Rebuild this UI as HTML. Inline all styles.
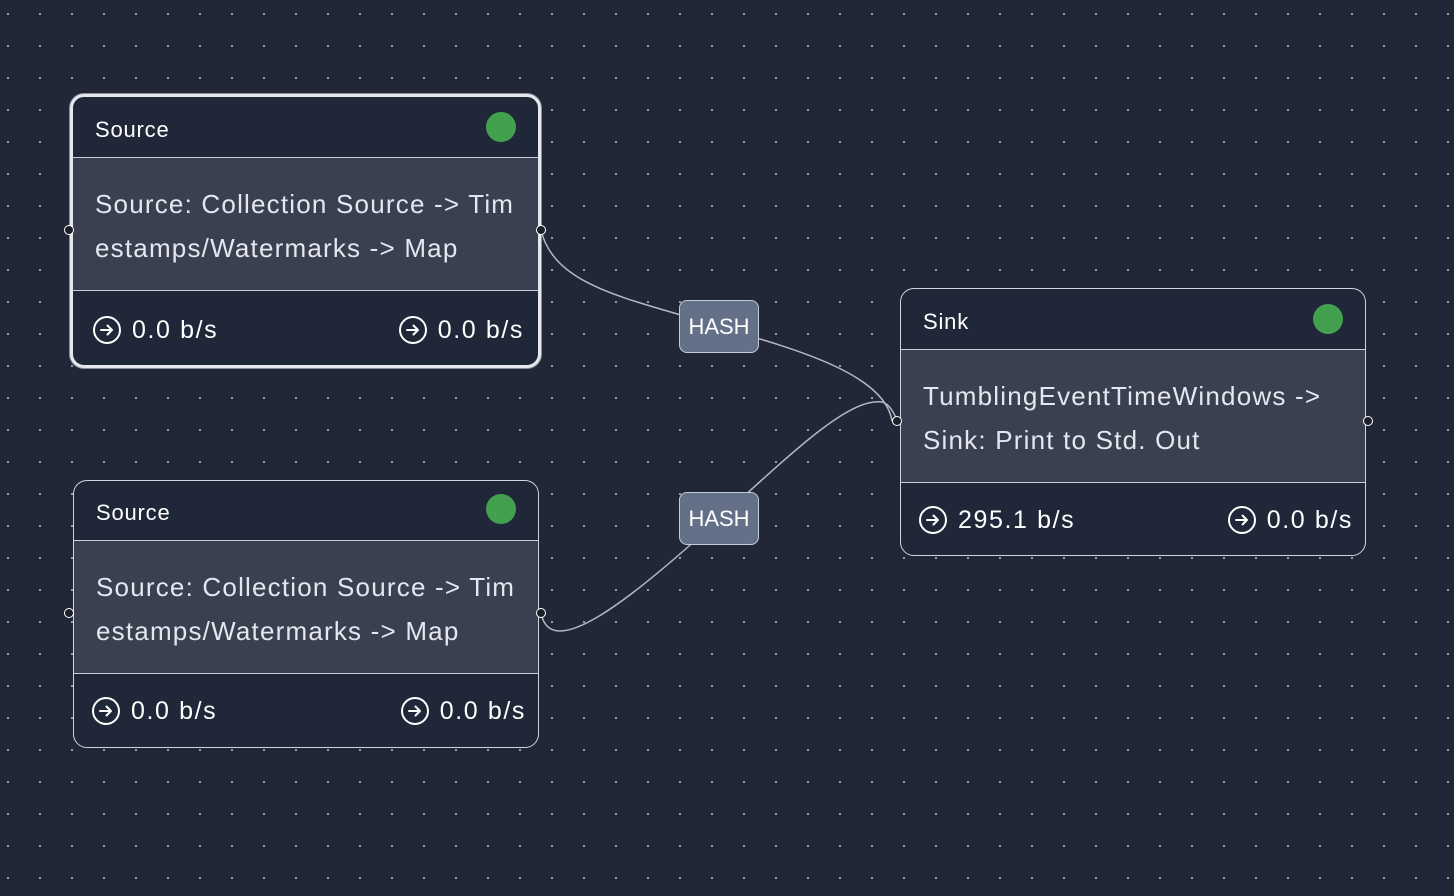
<!DOCTYPE html>
<html><head><meta charset="utf-8"><style>
*{margin:0;padding:0;box-sizing:border-box}
body{width:1454px;height:896px;overflow:hidden;background:#212736;font-family:"Liberation Sans",sans-serif;position:relative;
background-image:radial-gradient(circle,#9aa0ad 1px,transparent 1.3px);background-size:32px 32px;background-position:-8px -2px}
.node{position:absolute;border:1.5px solid #d0d4dc;border-radius:14px;background:#1f2738;overflow:visible}
.node.sel{border:3px solid #e6e8ee;box-shadow:0 0 0 1px #8a8f99}
.hd{height:61px;position:relative;border-bottom:1.5px solid #c9ccd3;color:#fff;font-size:22px;letter-spacing:0.8px;padding:20px 0 0 22px}
.dot{position:absolute;right:22px;top:15px;width:30px;height:30px;border-radius:50%;background:#43a04f}
.bd{height:133px;background:#3a4050;border-bottom:1.5px solid #c9ccd3;color:#e4e7ee;font-size:26px;line-height:44px;padding:24px 0 0 22px;white-space:nowrap;letter-spacing:1.2px}
.ft{height:74px;position:relative;color:#fff;font-size:25px;letter-spacing:1.6px}
.m{position:absolute;top:24px;display:flex;align-items:center;gap:10px}
.m svg{width:30px;height:30px}
.port{position:absolute;width:10px;height:10px;border-radius:50%;background:#1a1f2b;border:1.5px solid #fff}
.hash{position:absolute;width:80px;height:53px;background:#647087;border:1.5px solid #c5cad4;border-radius:8px;color:#fff;font-size:22px;text-align:center;line-height:52px}
</style></head><body>
<svg width="1454" height="896" style="position:absolute;left:0;top:0">
<path d="M541 230 C555 290 640 300 719 327 C800 350 885 375 892 421" stroke="#b4b8c0" stroke-width="1.5" fill="none"/>
<path d="M541 613 C550 660 620 610 719 519 C800 445 850 398 882 402 C890 404 895 415 897 421" stroke="#b4b8c0" stroke-width="1.5" fill="none"/>
</svg>
<svg width="0" height="0" style="position:absolute"><defs><symbol id="ic" viewBox="0 0 30 30"><circle cx="15" cy="15" r="13" fill="none" stroke="#fff" stroke-width="2"/><path d="M9 15h11M15.5 10.5l4.5 4.5-4.5 4.5" fill="none" stroke="#fff" stroke-width="2" stroke-linecap="round" stroke-linejoin="round"/></symbol></defs></svg>

<div class="node sel" style="left:70px;top:94px;width:471px;height:274px">
<div class="hd" style="height:61px;padding-top:20px">Source<div class="dot"></div></div>
<div class="bd">Source: Collection Source -&gt; Tim<br>estamps/Watermarks -&gt; Map</div>
<div class="ft"><div class="m" style="left:19px"><svg><use href="#ic"/></svg>0.0 b/s</div><div class="m" style="right:14px"><svg><use href="#ic"/></svg>0.0 b/s</div></div>
</div>

<div class="node" style="left:73px;top:480px;width:466px;height:268px">
<div class="hd" style="height:60px;padding-top:19px">Source<div class="dot" style="top:13px"></div></div>
<div class="bd">Source: Collection Source -&gt; Tim<br>estamps/Watermarks -&gt; Map</div>
<div class="ft"><div class="m" style="left:17px;top:22px"><svg><use href="#ic"/></svg>0.0 b/s</div><div class="m" style="right:12px;top:22px"><svg><use href="#ic"/></svg>0.0 b/s</div></div>
</div>

<div class="node" style="left:900px;top:288px;width:466px;height:268px">
<div class="hd" style="height:61px;padding-top:20px">Sink<div class="dot" style="right:22px"></div></div>
<div class="bd" style="height:133px">TumblingEventTimeWindows -&gt;<br>Sink: Print to Std. Out</div>
<div class="ft"><div class="m" style="left:17px;top:22px"><svg><use href="#ic"/></svg>295.1 b/s</div><div class="m" style="right:12px;top:22px"><svg><use href="#ic"/></svg>0.0 b/s</div></div>
</div>

<div class="port" style="left:64px;top:225px"></div>
<div class="port" style="left:536px;top:225px"></div>
<div class="port" style="left:64px;top:608px"></div>
<div class="port" style="left:536px;top:608px"></div>
<div class="port" style="left:892px;top:416px"></div>
<div class="port" style="left:1363px;top:416px"></div>

<div class="hash" style="left:679px;top:300px">HASH</div>
<div class="hash" style="left:679px;top:492px">HASH</div>
</body></html>
